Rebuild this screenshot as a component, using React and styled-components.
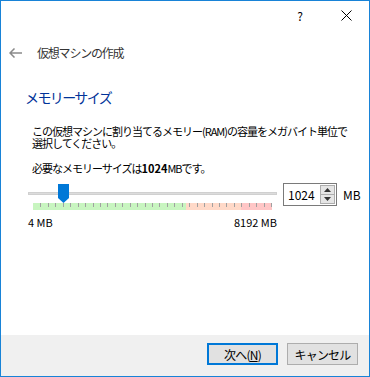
import React from 'react';
import styled, { createGlobalStyle } from 'styled-components';

const GlobalStyle = createGlobalStyle`
  html, body {
    margin: 0;
    padding: 0;
    background: #ffffff;
  }
  * {
    box-sizing: border-box;
  }
`;

const JP = '"Noto Sans CJK JP", "Noto Sans", sans-serif';

const Window = styled.div`
  width: 370px;
  height: 377px;
  border: 1px solid #1883d7;
  display: flex;
  flex-direction: column;
  background: #ffffff;
  font-family: ${JP};
  color: #000;
  overflow: hidden;
`;

const TitleBar = styled.div`
  height: 29px;
  display: flex;
  justify-content: flex-end;
  align-items: center;
`;

const CaptionButton = styled.div`
  width: 46px;
  height: 29px;
  display: flex;
  align-items: center;
  justify-content: center;
  font-size: 12px;
  line-height: 1;
`;

const Header = styled.div`
  display: flex;
  align-items: center;
  height: 16px;
  margin-top: 15px;
  padding-left: 8px;
`;

const PageTitle = styled.span`
  margin-left: 15px;
  font-size: 12px;
  line-height: 16px;
  letter-spacing: -1.2px;
  color: #333;
`;

const Content = styled.div`
  flex: 1;
  padding-left: 24px;
`;

const Heading = styled.h2`
  margin: 26px 0 0;
  font-size: 14px;
  font-weight: normal;
  line-height: 20px;
  letter-spacing: -1.6px;
  color: #003399;
`;

const Text = styled.p`
  margin: ${(p) => p.mt}px 0 0 7px;
  font-size: 11px;
  line-height: 12px;
  letter-spacing: -1px;
`;

const Strong = styled.b`
  font-weight: bold;
  letter-spacing: 0;
`;

const SliderRow = styled.div`
  display: flex;
  align-items: flex-start;
  margin: 9px 0 0 3px;
`;

const SliderColumn = styled.div`
  width: 249px;
`;

const TrackArea = styled.div`
  position: relative;
  height: 20px;
  padding-top: 9px;
`;

const Track = styled.div`
  height: 3px;
  background: #dcdcdc;
  border: 1px solid #d0d0d0;
`;

const Thumb = styled.svg`
  position: absolute;
  left: 30px;
  top: 1px;
`;

const Ticks = styled.div`
  margin-left: 5px;
  width: 239px;
  height: 7px;
  display: flex;
  justify-content: space-between;
  background: linear-gradient(
    to right,
    #c8f5c0 0,
    #c8f5c0 153px,
    #ffd9c8 153px,
    #ffd9c8 208px,
    #ffc6c6 208px
  );
`;

const Tick = styled.span`
  width: 1px;
  height: 4px;
  background: ${(p) => (p.edge ? 'transparent' : '#a0a0a0')};
`;

const Scale = styled.div`
  display: flex;
  justify-content: space-between;
  margin-top: 6px;
  font-size: 11px;
  line-height: 12px;
`;

const SpinBox = styled.div`
  margin-left: 6px;
  width: 54px;
  height: 23px;
  border: 1px solid #7a7a7a;
  display: flex;
  align-items: center;
  justify-content: space-between;
  padding: 0 1px 0 4px;
  font-size: 12px;
`;

const SpinButtons = styled.div`
  width: 15px;
  height: 19px;
  border: 1px solid #adadad;
  background: #e5e5e5;
  display: flex;
  flex-direction: column;
`;

const SpinHalf = styled.div`
  flex: 1;
  display: flex;
  align-items: center;
  justify-content: center;
  border-top: ${(p) => (p.bottom ? '1px solid #adadad' : 'none')};
`;

const Unit = styled.span`
  margin-left: 6px;
  font-size: 12px;
  line-height: 23px;
`;

const Footer = styled.div`
  height: 41px;
  background: #f0f0f0;
  display: flex;
  justify-content: flex-end;
  align-items: flex-start;
  gap: 9px;
  padding: 8px 11px 0 0;
`;

const Button = styled.button`
  width: 71px;
  height: 22px;
  padding: 0;
  background: #e1e1e1;
  border: ${(p) => (p.primary ? '2px solid #0078d7' : '1px solid #adadad')};
  font-family: ${JP};
  font-size: 12px;
  letter-spacing: -0.8px;
  color: #000;
  display: flex;
  align-items: center;
  justify-content: center;
`;

const Key = styled.span`
  text-decoration: underline;
`;

export default function App() {
  const ticks = Array.from({ length: 33 }, (_, i) => i);

  return (
    <>
      <GlobalStyle />
      <Window>
        <TitleBar>
          <CaptionButton>?</CaptionButton>
          <CaptionButton>
            <svg width="11" height="11" viewBox="0 0 11 11">
              <path d="M0.5 0.5 L10.5 10.5 M10.5 0.5 L0.5 10.5" stroke="#000" strokeWidth="1" />
            </svg>
          </CaptionButton>
        </TitleBar>

        <Header>
          <svg width="13" height="10" viewBox="0 0 13 10">
            <path d="M1 5 H13 M5.5 0.5 L1 5 L5.5 9.5" stroke="#8a8a8a" strokeWidth="1.5" fill="none" />
          </svg>
          <PageTitle>仮想マシンの作成</PageTitle>
        </Header>

        <Content>
          <Heading>メモリーサイズ</Heading>
          <Text mt={18}>
            この仮想マシンに割り当てるメモリー(RAM)の容量をメガバイト単位で
            <br />
            選択してください。
          </Text>
          <Text mt={13}>
            必要なメモリーサイズは<Strong>1024</Strong>MBです。
          </Text>

          <SliderRow>
            <SliderColumn>
              <TrackArea>
                <Track />
                <Thumb width="11" height="19" viewBox="0 0 11 19">
                  <path d="M0 0 H11 V14 L5.5 19 L0 14 Z" fill="#0078d7" />
                </Thumb>
              </TrackArea>
              <Ticks>
                {ticks.map((i) => (
                  <Tick key={i} edge={i === 0} />
                ))}
              </Ticks>
              <Scale>
                <span>4 MB</span>
                <span>8192 MB</span>
              </Scale>
            </SliderColumn>

            <SpinBox>
              <span>1024</span>
              <SpinButtons>
                <SpinHalf>
                  <svg width="7" height="4" viewBox="0 0 7 4">
                    <path d="M0 4 L3.5 0 L7 4 Z" fill="#333" />
                  </svg>
                </SpinHalf>
                <SpinHalf bottom>
                  <svg width="7" height="4" viewBox="0 0 7 4">
                    <path d="M0 0 L3.5 4 L7 0 Z" fill="#333" />
                  </svg>
                </SpinHalf>
              </SpinButtons>
            </SpinBox>
            <Unit>MB</Unit>
          </SliderRow>
        </Content>

        <Footer>
          <Button primary>
            次へ(<Key>N</Key>)
          </Button>
          <Button>キャンセル</Button>
        </Footer>
      </Window>
    </>
  );
}
